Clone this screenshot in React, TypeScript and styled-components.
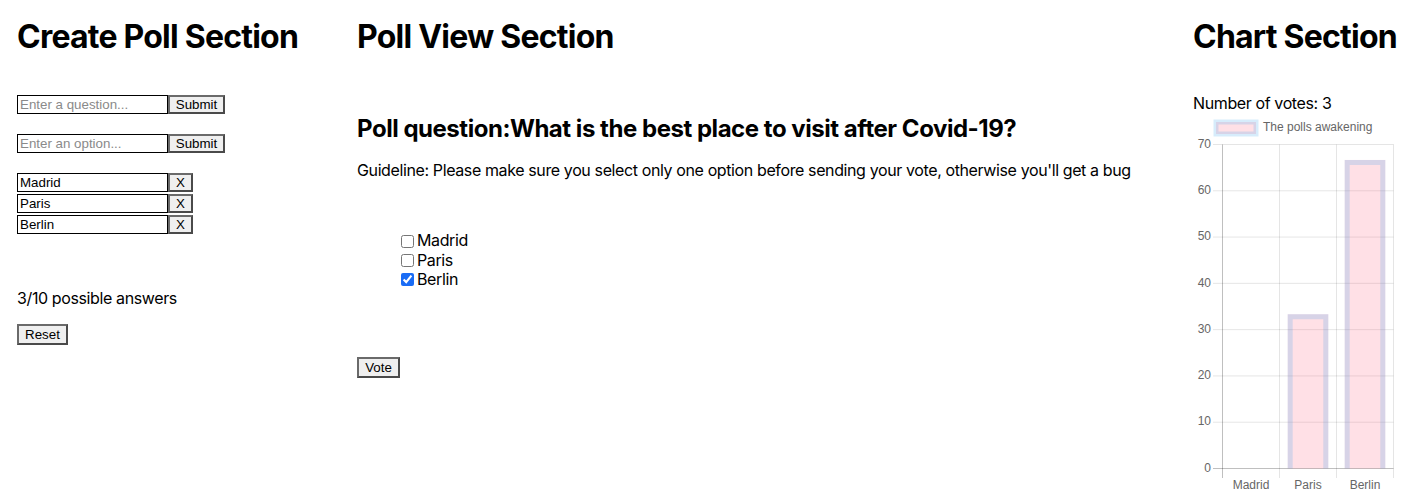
import React from "react";
import styled, { createGlobalStyle } from "styled-components";

const GlobalStyle = createGlobalStyle`
  html, body { margin: 0; padding: 0; background: #fff; }
  body { font-family: Inter, "Noto Sans", sans-serif; color: #000; font-size: 16px; letter-spacing: -0.384px; }
`;

const Page = styled.div`
  display: grid;
  grid-template-columns: 340px 836px 1fr;
  padding: 16px 0 0 17px;
  box-sizing: border-box;
  width: 1412px;
  height: 502px;
  overflow: hidden;
`;

const Column = styled.section`
  display: flex;
  flex-direction: column;
  align-items: flex-start;
`;

const Title = styled.h1`
  margin: 2px 0 -2px;
  font-size: 32px;
  line-height: 38px;
  font-weight: 700;
  letter-spacing: -0.77px;
  white-space: nowrap;
`;

const FormRow = styled.div<{ $mt: number }>`
  display: flex;
  margin-top: ${(p) => p.$mt}px;
`;

const OptionList = styled.div`
  display: flex;
  flex-direction: column;
  gap: 2px;
  margin-top: 20px;
`;

const TextInput = styled.input`
  box-sizing: border-box;
  width: 151px;
  height: 19px;
  margin: 0;
  padding: 1px 2px;
  border: 1px solid #000;
  font-family: "Liberation Sans", Arial, sans-serif;
  font-size: 13.33px;
  letter-spacing: 0;
  color: #000;
  background: #fff;
  outline: none;
  &::placeholder { color: #8a8a8a; }
`;

const Btn = styled.button<{ $w: number; $h?: number }>`
  box-sizing: border-box;
  width: ${(p) => p.$w}px;
  height: ${(p) => p.$h ?? 19}px;
  margin: 0;
  padding: 0;
  border-style: solid;
  border-width: 2px;
  border-color: #6a6a6a #4a4a4a #4a4a4a #6a6a6a;
  background: #efefef;
  font-family: "Liberation Sans", Arial, sans-serif;
  font-size: 13.33px;
  letter-spacing: 0;
  line-height: 1;
  color: #000;
  display: flex;
  align-items: center;
  justify-content: center;
`;

const Body = styled.p<{ $mt: number }>`
  margin: ${(p) => p.$mt}px 0 0;
  font-size: 16px;
  line-height: 19.4px;
  white-space: nowrap;
`;

const Question = styled.h2`
  margin: 60px 0 0;
  font-size: 24px;
  line-height: 29px;
  font-weight: 700;
  letter-spacing: -0.47px;
  white-space: nowrap;
`;

const Choices = styled.ul`
  list-style: none;
  margin: 51px 0 0;
  padding: 0 0 0 40px;
`;

const Choice = styled.li`
  display: flex;
  align-items: center;
  height: 19.2px;
  font-size: 16px;
  line-height: 19.2px;
`;

const Check = styled.input`
  width: 13px;
  height: 13px;
  margin: 1px 3px 0 4px;
  accent-color: #1a6cf5;
`;

const ChartSvg = styled.svg`
  display: block;
  margin-top: 0;
  font-family: "Liberation Sans", Arial, sans-serif;
  letter-spacing: 0;
`;

const options = ["Madrid", "Paris", "Berlin"];
const votes = [0, 33.333, 66.667];

function Chart() {
  const x0 = 29.5;
  const step = 57;
  const yTop = 31.5;
  const yBot = 355.5;
  const perUnit = (yBot - yTop) / 70;
  const ticks = [70, 60, 50, 40, 30, 20, 10, 0];
  const grid = "rgba(0,0,0,0.1)";
  const zero = "rgba(0,0,0,0.25)";
  return (
    <ChartSvg width={219} height={389} viewBox="0 0 219 389">
      <rect x={23} y={9} width={40} height={12} fill="rgba(255,99,132,0.2)" stroke="rgba(54,162,235,0.2)" strokeWidth={5} />
      <text x={70} y={15} fontSize={12} fill="#666" dominantBaseline="middle">The polls awakening</text>
      {ticks.map((t) => {
        const y = yBot - t * perUnit;
        return (
          <g key={t}>
            <line x1={20} x2={200.5} y1={y} y2={y} stroke={t === 0 ? zero : grid} strokeWidth={1} />
            <text x={18} y={y} fontSize={12} fill="#666" textAnchor="end" dominantBaseline="middle">{t}</text>
          </g>
        );
      })}
      {[0, 1, 2, 3].map((i) => (
        <line key={i} x1={x0 + i * step} x2={x0 + i * step} y1={yTop} y2={365} stroke={i === 0 ? zero : grid} strokeWidth={1} />
      ))}
      {votes.map((v, i) => {
        if (v <= 0) return null;
        const cx = x0 + step * i + step / 2;
        const w = 40.6;
        const l = cx - w / 2;
        const r = cx + w / 2;
        const top = yBot - v * perUnit;
        return (
          <g key={i}>
            <rect x={l} y={top} width={w} height={yBot - top} fill="rgba(255,99,132,0.2)" />
            <path d={`M${l + 2.5},${yBot} L${l + 2.5},${top + 2.5} L${r - 2.5},${top + 2.5} L${r - 2.5},${yBot}`} fill="none" stroke="rgba(54,162,235,0.2)" strokeWidth={5} />
          </g>
        );
      })}
      {options.map((o, i) => (
        <text key={o} x={x0 + step * i + step / 2} y={373} fontSize={12} fill="#666" textAnchor="middle" dominantBaseline="middle">{o}</text>
      ))}
    </ChartSvg>
  );
}

export default function App() {
  return (
    <>
      <GlobalStyle />
      <Page>
        <Column>
          <Title>Create Poll Section</Title>
          <FormRow $mt={41}>
            <TextInput placeholder="Enter a question..." />
            <Btn $w={57}>Submit</Btn>
          </FormRow>
          <FormRow $mt={20}>
            <TextInput placeholder="Enter an option..." />
            <Btn $w={57}>Submit</Btn>
          </FormRow>
          <OptionList>
            {options.map((o) => (
              <FormRow $mt={0} key={o}>
                <TextInput defaultValue={o} />
                <Btn $w={25}>X</Btn>
              </FormRow>
            ))}
          </OptionList>
          <Body $mt={55}>3/10 possible answers</Body>
          <Body $mt={16}>
            <Btn $w={51} $h={21}>Reset</Btn>
          </Body>
        </Column>
        <Column>
          <Title>Poll View Section</Title>
          <Question>Poll question:What is the best place to visit after Covid-19?</Question>
          <Body $mt={18}>Guideline: Please make sure you select only one option before sending your vote, otherwise you'll get a bug</Body>
          <Choices>
            {options.map((o, i) => (
              <Choice key={o}>
                <Check type="checkbox" defaultChecked={i === 2} />
                {o}
              </Choice>
            ))}
          </Choices>
          <Body $mt={68}>
            <Btn $w={43} $h={21}>Vote</Btn>
          </Body>
        </Column>
        <Column>
          <Title>Chart Section</Title>
          <Body $mt={40}>Number of votes: 3</Body>
          <Chart />
        </Column>
      </Page>
    </>
  );
}
